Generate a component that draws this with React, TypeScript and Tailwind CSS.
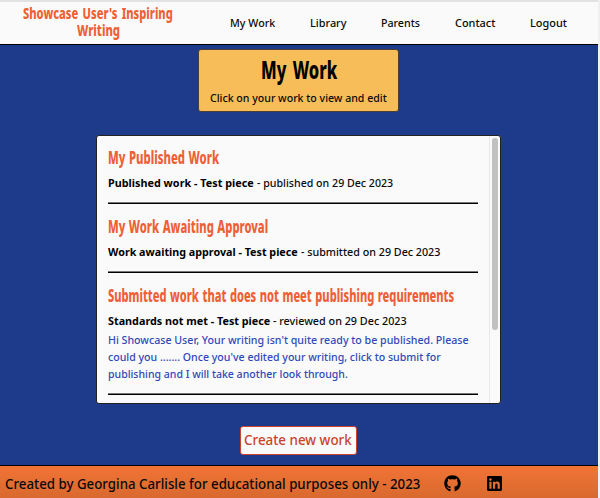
import { useLayoutEffect, useRef, type ReactNode } from 'react';
import { FaGithub, FaLinkedin } from 'react-icons/fa';

// One line of text, stretched or condensed to fill the width of its box.
function Line({ className = '', children }: { className?: string; children: ReactNode }) {
  const box = useRef<HTMLSpanElement>(null);
  const text = useRef<HTMLSpanElement>(null);
  useLayoutEffect(() => {
    if (box.current && text.current) {
      text.current.style.transform = `scaleX(${box.current.clientWidth / text.current.offsetWidth})`;
    }
  }, []);
  return (
    <span ref={box} className={`block shrink-0 whitespace-nowrap ${className}`}>
      <span ref={text} className="inline-block origin-left align-top">{children}</span>
    </span>
  );
}

function Heading({ className, children }: { className: string; children: ReactNode }) {
  return (
    <h2 className="text-[17.5px] leading-[24px] font-extrabold text-[#ee5f36] [word-spacing:1px]">
      <Line className={className}>{children}</Line>
    </h2>
  );
}

function Rule() {
  return <hr className="h-[2px] border-t border-b border-t-[#777] border-b-black" />;
}

export default function App() {
  return (
    <div className="flex h-[498px] w-[600px] overflow-hidden bg-[#f0f0f0] font-['Noto_Sans',sans-serif] text-[11.2px] leading-[17px] font-medium text-[#0a0a0a]">
      <div className="flex w-[598px] flex-col bg-[#1e3a8a]">
        <header className="flex h-[45px] shrink-0 border-t-2 border-b border-t-[#e2e2e2] border-b-black bg-[#fafafa]">
          <h1 className="ml-[23px] flex w-[150px] flex-col items-center pt-[3px] text-[15.5px] leading-[17px] font-extrabold text-[#ee5f36] [word-spacing:2px]">
            <Line className="w-[150px]">Showcase User's Inspiring</Line>
            <Line className="w-[43px]">Writing</Line>
          </h1>
          <nav className="ml-[57px] flex pt-[12px]">
            <Line className="mr-[35px] w-[45px]">My Work</Line>
            <Line className="mr-[35px] w-[36px]">Library</Line>
            <Line className="mr-[35px] w-[39px]">Parents</Line>
            <Line className="mr-[35px] w-[40px]">Contact</Line>
            <Line className="w-[37px]">Logout</Line>
          </nav>
        </header>

        <main className="flex flex-1 flex-col items-center pr-[1px]">
          <section className="mt-1 flex h-[63px] w-[201px] flex-col items-center rounded-[3px] border border-[#4b3f32] bg-[#f7bd59] pt-[4px]">
            <h1 className="text-[24px] leading-[31px] font-extrabold text-black [word-spacing:3px]">
              <Line className="w-[76px]">My Work</Line>
            </h1>
            <Line className="mt-[4px] w-[177px]">Click on your work to view and edit</Line>
          </section>

          <section className="mt-[23px] flex h-[269px] w-[405px] justify-between overflow-hidden rounded-[3px] border border-[#222] bg-[#fafafa]">
            <div className="ml-[11px] w-[370px] pt-[9px]">
              <Heading className="w-[111px]">My Published Work</Heading>
              <div className="mt-[5px] mb-[11px] flex gap-[3px]">
                <Line className="w-[146px] font-bold text-black">Published work - Test piece</Line>
                <Line className="w-[136px]">- published on 29 Dec 2023</Line>
              </div>
              <Rule />
              <div className="h-[10px]" />
              <Heading className="w-[160px]">My Work Awaiting Approval</Heading>
              <div className="mt-[5px] mb-[11px] flex gap-[3px]">
                <Line className="w-[190px] font-bold text-black">Work awaiting approval - Test piece</Line>
                <Line className="w-[139px]">- submitted on 29 Dec 2023</Line>
              </div>
              <Rule />
              <div className="h-[10px]" />
              <Heading className="w-[346px]">Submitted work that does not meet publishing requirements</Heading>
              <div className="mt-[5px] flex gap-[3px]">
                <Line className="w-[162px] font-bold text-black">Standards not met - Test piece</Line>
                <Line className="w-[134px]">- reviewed on 29 Dec 2023</Line>
              </div>
              <div className="mt-[2px] mb-[11px] text-[#3048b8]">
                <Line className="w-[361px]">Hi Showcase User, Your writing isn't quite ready to be published. Please</Line>
                <Line className="w-[333px]">could you ....... Once you've edited your writing, click to submit for</Line>
                <Line className="w-[240px]">publishing and I will take another look through.</Line>
              </div>
              <Rule />
            </div>
            <div className="flex w-[11px] justify-center border-l border-[#e8e8e8] pt-[2px]">
              <div className="h-[192px] w-[6px] rounded-full bg-[#c1c1c1]" />
            </div>
          </section>

          <button className="mt-[22px] flex h-[29px] w-[117px] justify-center rounded-[3px] border-[1.5px] border-[#c9442b] bg-[#fafafa] pt-[2px] pr-[1px] text-[14px] leading-[22px] font-medium text-[#c9442b]">
            <Line className="w-[108px]">Create new work</Line>
          </button>
        </main>

        <footer className="flex h-[33px] shrink-0 border-t border-black bg-linear-to-b from-[#f17435] to-[#d9692f] pl-[5px] text-[14px] leading-[22px]">
          <Line className="mt-[7px] w-[415px]">Created by Georgina Carlisle for educational purposes only - 2023</Line>
          <FaGithub className="mt-[9px] ml-[24px] size-[17px] text-black" />
          <FaLinkedin className="mt-[9px] ml-[25px] size-[17px] text-black" />
        </footer>
      </div>
    </div>
  );
}
